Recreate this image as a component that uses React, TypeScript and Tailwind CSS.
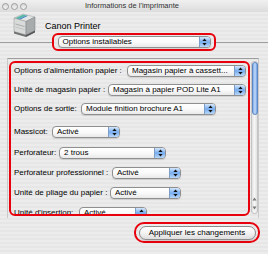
import React from "react";

function Arrows() {
  return (
    <svg width="5" height="8" viewBox="0 0 5 8">
      <path d="M2.5 0.5 L4.6 3 L0.4 3 Z" fill="#111" />
      <path d="M2.5 7.5 L4.6 5 L0.4 5 Z" fill="#111" />
    </svg>
  );
}

function Popup({ text, className }: { text: string; className: string }) {
  return (
    <div
      className={
        "flex h-[12px] shrink-0 overflow-hidden rounded-[4px] border border-[#8f8f8f] bg-gradient-to-b from-white via-[#fafafa] to-[#e9e9e9] shadow-[0_1px_1px_rgba(0,0,0,0.12)] " +
        className
      }
    >
      <span className="flex-1 truncate whitespace-nowrap pl-[4px] text-[8px] leading-[10px] text-black">
        {text}
      </span>
      <div className="flex w-[11px] items-center justify-center border-l border-[#7d9cc6] bg-gradient-to-b from-[#d6e7fb] via-[#76acee] to-[#b9d7f9]">
        <Arrows />
      </div>
    </div>
  );
}

function Row({
  label,
  labelW,
  text,
  popW,
  mt,
}: {
  label: string;
  labelW: string;
  text: string;
  popW: string;
  mt: string;
}) {
  return (
    <div className={"flex shrink-0 items-center " + mt}>
      <span className={"shrink-0 whitespace-nowrap text-[8px] leading-[12px] text-black " + labelW}>
        {label}
      </span>
      <Popup text={text} className={popW} />
    </div>
  );
}

function PrinterIcon() {
  return (
    <svg width="25" height="26" viewBox="0 0 25 26">
      <path d="M2 6 L11 2 L23 5 L14 9.5 Z" fill="#e4e6e6" stroke="#9a9c9c" strokeWidth="0.5" />
      <path d="M3 6.2 L11.2 2.6 L14.5 3.4 L6.2 7.2 Z" fill="#58b8a8" />
      <path d="M6.2 7.2 L14.5 3.4 L16 3.8 L7.8 7.7 Z" fill="#3d7fc0" />
      <path d="M2 6 L14 9.5 L14 23 L2 19.5 Z" fill="#d9dbdb" stroke="#8e9090" strokeWidth="0.5" />
      <path d="M14 9.5 L23 5 L23 18.5 L14 23 Z" fill="#a9acac" stroke="#7a7c7c" strokeWidth="0.5" />
      <path d="M3.5 12 L12.5 14.6" stroke="#9da0a0" strokeWidth="0.8" />
      <path d="M3.5 15 L12.5 17.6" stroke="#b3b5b5" strokeWidth="0.6" />
      <path d="M2 19.5 L14 23 L14 25 L2 21.5 Z" fill="#6f7272" />
      <path d="M14 23 L23 18.5 L23 20.5 L14 25 Z" fill="#555858" />
    </svg>
  );
}

export default function App() {
  return (
    <div className="relative h-[254px] w-[268px] overflow-hidden bg-[repeating-linear-gradient(180deg,#ececec_0px,#ececec_2px,#e6e6e6_2px,#e6e6e6_4px)] font-['Liberation_Sans',Arial,sans-serif] text-black">
      {/* title bar */}
      <div className="relative flex h-[12px] items-center bg-gradient-to-b from-[#f0f0f0] to-[#dcdcdc]">
        <div className="ml-[2px] flex gap-[2px]">
          <div className="h-[7px] w-[7px] rounded-full border border-[#9c9c9c] bg-gradient-to-b from-[#d8d8d8] to-[#f4f4f4]" />
          <div className="h-[7px] w-[7px] rounded-full border border-[#9c9c9c] bg-gradient-to-b from-[#d8d8d8] to-[#f4f4f4]" />
          <div className="h-[7px] w-[7px] rounded-full border border-[#9c9c9c] bg-gradient-to-b from-[#d8d8d8] to-[#f4f4f4]" />
        </div>
        <div className="ml-[58px] whitespace-nowrap text-[7.5px] leading-[10px] text-[#333]">
          Informations de l'imprimante
        </div>
      </div>

      {/* header */}
      <div className="flex h-[21px] items-start">
        <div className="-mb-[5px] ml-[12px] mt-0 h-[26px] w-[25px] shrink-0">
          <PrinterIcon />
        </div>
        <span className="ml-[8px] mt-[9px] whitespace-nowrap text-[9px] leading-[10px]">
          Canon Printer
        </span>
      </div>

      {/* popup row with separator */}
      <div className="flex h-[18px] items-center">
        <div className="h-px w-[52px] bg-[#9e9e9e]" />
        <div className="flex h-[18px] w-[164px] items-center justify-center rounded-[6px] border-2 border-[#e8000d]">
          <Popup text="Options installables" className="w-[153px]" />
        </div>
        <div className="h-px flex-1 bg-[#9e9e9e]" />
      </div>

      {/* frame */}
      <div className="ml-[7px] mt-[7px] flex h-[160px] w-[252px] border-x border-t border-x-[#c9c9c9] border-t-[#9e9e9e] pl-px pt-[2px]">
        <div className="flex h-[155px] w-[241px] flex-col overflow-hidden rounded-[6px] border-2 border-[#e8000d] pl-[3px]">
          <Row mt="mt-[2px]" label="Options d'alimentation papier :" labelW="w-[113px]" text="Magasin papier à cassett..." popW="w-[119px]" />
          <Row mt="mt-[7px]" label="Unité de magasin papier :" labelW="w-[94px]" text="Magasin à papier POD Lite A1" popW="w-[138px]" />
          <Row mt="mt-[7px]" label="Options de sortie:" labelW="w-[67px]" text="Module finition brochure A1" popW="w-[135px]" />
          <Row mt="mt-[11px]" label="Massicot:" labelW="w-[38px]" text="Activé" popW="w-[68px]" />
          <Row mt="mt-[9px]" label="Perforateur:" labelW="w-[45px]" text="2 trous" popW="w-[107px]" />
          <Row mt="mt-[8px]" label="Perforateur professionnel :" labelW="w-[98px]" text="Activé" popW="w-[69px]" />
          <Row mt="mt-[8px]" label="Unité de pliage du papier :" labelW="w-[96px]" text="Activé" popW="w-[71px]" />
          <Row mt="mt-[8px]" label="Unité d'insertion:" labelW="w-[65px]" text="Activé" popW="w-[68px]" />
        </div>
        {/* scrollbar */}
        <div className="ml-px flex h-[153px] w-[7px] flex-col items-center rounded-[3px] border border-[#c4c4c4] bg-gradient-to-r from-[#e2e2e2] via-[#f6f6f6] to-[#e2e2e2]">
          <div className="mt-0 h-[53px] w-[6px] rounded-[3px] border border-[#5f86c0] bg-gradient-to-r from-[#7aaae8] via-[#c4dcfa] to-[#6a9fe4]" />
          <div className="flex-1" />
          <div className="mb-[3px] flex flex-col items-center gap-[5px]">
            <svg width="5" height="4" viewBox="0 0 5 4"><path d="M2.5 0.5 L4.5 3.5 L0.5 3.5 Z" fill="#777" /></svg>
            <svg width="5" height="4" viewBox="0 0 5 4"><path d="M2.5 3.5 L4.5 0.5 L0.5 0.5 Z" fill="#777" /></svg>
          </div>
        </div>
      </div>

      {/* button row */}
      <div className="ml-[134px] mt-[4px] flex h-[21px] w-[126px] items-center justify-center rounded-[10px] border-2 border-[#e8000d]">
        <div className="flex h-[14px] w-[117px] items-center justify-center rounded-full border border-[#8c8c8c] bg-gradient-to-b from-white via-[#f3f3f3] to-[#dedede] shadow-[0_1px_1px_rgba(0,0,0,0.15)]">
          <span className="whitespace-nowrap text-[8px] leading-[10px]">Appliquer les changements</span>
        </div>
      </div>
    </div>
  );
}
